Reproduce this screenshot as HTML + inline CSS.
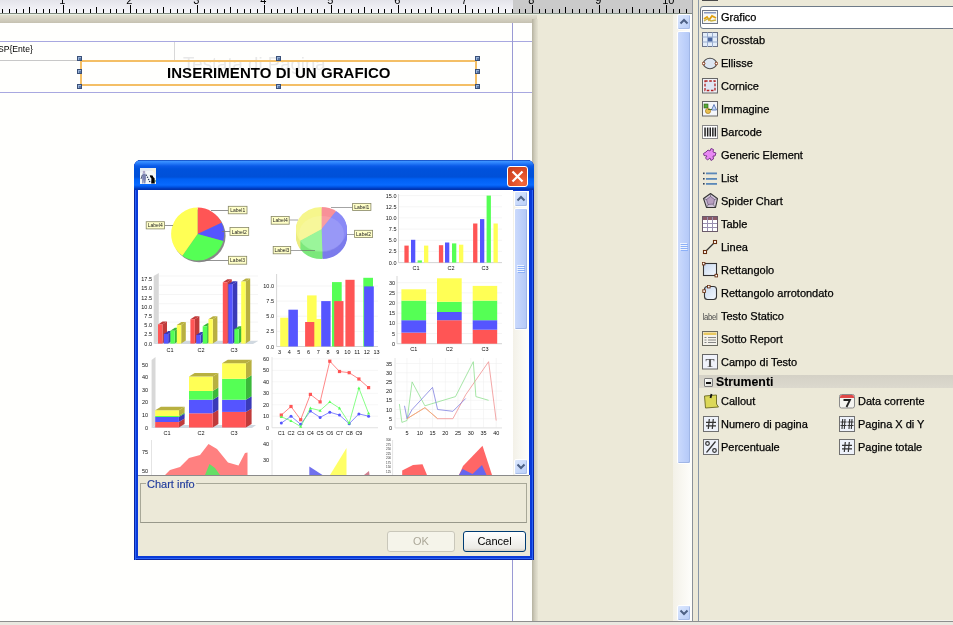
<!DOCTYPE html>
<html><head><meta charset="utf-8"><style>
*{margin:0;padding:0;box-sizing:border-box}
html,body{width:953px;height:625px;overflow:hidden}
body{position:relative;will-change:transform;background:#ece9d8;font-family:"Liberation Sans", sans-serif;font-size:11px;color:#000}
.a{position:absolute}
.h{position:absolute;width:5px;height:5px;background:#5a78a8;border:1px solid #3a5078;box-shadow:inset 1px 1px 0 #9ab4d8}
.pt{position:absolute;font-size:11px;line-height:14px;white-space:nowrap;color:#000;-webkit-text-stroke:0.25px #000}
.sbb{position:absolute;background:linear-gradient(135deg,#dce8fe,#b8cdf8);border:1px solid #fff;border-radius:2px;box-shadow:inset -1px -1px 0 #a8bde8}
.thumb{position:absolute;background:linear-gradient(90deg,#cbdafc,#bccffa 60%,#b3c8f6);border:1px solid #fff;border-radius:2px;box-shadow:inset -1px -1px 0 #a0b6e6}
</style></head><body>
<svg width="692" height="14" style="position:absolute;left:0;top:0"><defs><linearGradient id="rg" x1="0" y1="0" x2="0" y2="1"><stop offset="0" stop-color="#e4e4ea"/><stop offset="1" stop-color="#f8f8fc"/></linearGradient></defs><rect x="0" y="0" width="513" height="14" fill="url(#rg)"/><rect x="513" y="0" width="179" height="14" fill="#cacaca"/><rect x="2" y="9" width="1" height="4" fill="#000"/><rect x="9" y="9" width="1" height="4" fill="#000"/><rect x="16" y="9" width="1" height="4" fill="#000"/><rect x="23" y="9" width="1" height="4" fill="#000"/><rect x="29" y="7" width="1" height="6" fill="#000"/><rect x="36" y="9" width="1" height="4" fill="#000"/><rect x="43" y="9" width="1" height="4" fill="#000"/><rect x="49" y="9" width="1" height="4" fill="#000"/><rect x="56" y="9" width="1" height="4" fill="#000"/><rect x="63" y="5" width="1" height="8" fill="#000"/><text x="59.2" y="4" font-size="11" font-family="Liberation Sans" fill="#000">1</text><rect x="69" y="9" width="1" height="4" fill="#000"/><rect x="76" y="9" width="1" height="4" fill="#000"/><rect x="83" y="9" width="1" height="4" fill="#000"/><rect x="90" y="9" width="1" height="4" fill="#000"/><rect x="96" y="7" width="1" height="6" fill="#000"/><rect x="103" y="9" width="1" height="4" fill="#000"/><rect x="110" y="9" width="1" height="4" fill="#000"/><rect x="116" y="9" width="1" height="4" fill="#000"/><rect x="123" y="9" width="1" height="4" fill="#000"/><rect x="130" y="5" width="1" height="8" fill="#000"/><text x="126.2" y="4" font-size="11" font-family="Liberation Sans" fill="#000">2</text><rect x="136" y="9" width="1" height="4" fill="#000"/><rect x="143" y="9" width="1" height="4" fill="#000"/><rect x="150" y="9" width="1" height="4" fill="#000"/><rect x="157" y="9" width="1" height="4" fill="#000"/><rect x="163" y="7" width="1" height="6" fill="#000"/><rect x="170" y="9" width="1" height="4" fill="#000"/><rect x="177" y="9" width="1" height="4" fill="#000"/><rect x="183" y="9" width="1" height="4" fill="#000"/><rect x="190" y="9" width="1" height="4" fill="#000"/><rect x="197" y="5" width="1" height="8" fill="#000"/><text x="193.2" y="4" font-size="11" font-family="Liberation Sans" fill="#000">3</text><rect x="204" y="9" width="1" height="4" fill="#000"/><rect x="210" y="9" width="1" height="4" fill="#000"/><rect x="217" y="9" width="1" height="4" fill="#000"/><rect x="224" y="9" width="1" height="4" fill="#000"/><rect x="230" y="7" width="1" height="6" fill="#000"/><rect x="237" y="9" width="1" height="4" fill="#000"/><rect x="244" y="9" width="1" height="4" fill="#000"/><rect x="250" y="9" width="1" height="4" fill="#000"/><rect x="257" y="9" width="1" height="4" fill="#000"/><rect x="264" y="5" width="1" height="8" fill="#000"/><text x="260.2" y="4" font-size="11" font-family="Liberation Sans" fill="#000">4</text><rect x="271" y="9" width="1" height="4" fill="#000"/><rect x="277" y="9" width="1" height="4" fill="#000"/><rect x="284" y="9" width="1" height="4" fill="#000"/><rect x="291" y="9" width="1" height="4" fill="#000"/><rect x="297" y="7" width="1" height="6" fill="#000"/><rect x="304" y="9" width="1" height="4" fill="#000"/><rect x="311" y="9" width="1" height="4" fill="#000"/><rect x="317" y="9" width="1" height="4" fill="#000"/><rect x="324" y="9" width="1" height="4" fill="#000"/><rect x="331" y="5" width="1" height="8" fill="#000"/><text x="327.2" y="4" font-size="11" font-family="Liberation Sans" fill="#000">5</text><rect x="338" y="9" width="1" height="4" fill="#000"/><rect x="344" y="9" width="1" height="4" fill="#000"/><rect x="351" y="9" width="1" height="4" fill="#000"/><rect x="358" y="9" width="1" height="4" fill="#000"/><rect x="364" y="7" width="1" height="6" fill="#000"/><rect x="371" y="9" width="1" height="4" fill="#000"/><rect x="378" y="9" width="1" height="4" fill="#000"/><rect x="384" y="9" width="1" height="4" fill="#000"/><rect x="391" y="9" width="1" height="4" fill="#000"/><rect x="398" y="5" width="1" height="8" fill="#000"/><text x="394.2" y="4" font-size="11" font-family="Liberation Sans" fill="#000">6</text><rect x="405" y="9" width="1" height="4" fill="#000"/><rect x="411" y="9" width="1" height="4" fill="#000"/><rect x="418" y="9" width="1" height="4" fill="#000"/><rect x="425" y="9" width="1" height="4" fill="#000"/><rect x="431" y="7" width="1" height="6" fill="#000"/><rect x="438" y="9" width="1" height="4" fill="#000"/><rect x="445" y="9" width="1" height="4" fill="#000"/><rect x="451" y="9" width="1" height="4" fill="#000"/><rect x="458" y="9" width="1" height="4" fill="#000"/><rect x="465" y="5" width="1" height="8" fill="#000"/><text x="461.2" y="4" font-size="11" font-family="Liberation Sans" fill="#000">7</text><rect x="472" y="9" width="1" height="4" fill="#000"/><rect x="478" y="9" width="1" height="4" fill="#000"/><rect x="485" y="9" width="1" height="4" fill="#000"/><rect x="492" y="9" width="1" height="4" fill="#000"/><rect x="498" y="7" width="1" height="6" fill="#000"/><rect x="505" y="9" width="1" height="4" fill="#000"/><rect x="512" y="9" width="1" height="4" fill="#000"/><rect x="519" y="9" width="1" height="4" fill="#000"/><rect x="525" y="9" width="1" height="4" fill="#000"/><rect x="532" y="5" width="1" height="8" fill="#000"/><text x="528.2" y="4" font-size="11" font-family="Liberation Sans" fill="#000">8</text><rect x="539" y="9" width="1" height="4" fill="#000"/><rect x="545" y="9" width="1" height="4" fill="#000"/><rect x="552" y="9" width="1" height="4" fill="#000"/><rect x="559" y="9" width="1" height="4" fill="#000"/><rect x="565" y="7" width="1" height="6" fill="#000"/><rect x="572" y="9" width="1" height="4" fill="#000"/><rect x="579" y="9" width="1" height="4" fill="#000"/><rect x="586" y="9" width="1" height="4" fill="#000"/><rect x="592" y="9" width="1" height="4" fill="#000"/><rect x="599" y="5" width="1" height="8" fill="#000"/><text x="595.2" y="4" font-size="11" font-family="Liberation Sans" fill="#000">9</text><rect x="606" y="9" width="1" height="4" fill="#000"/><rect x="612" y="9" width="1" height="4" fill="#000"/><rect x="619" y="9" width="1" height="4" fill="#000"/><rect x="626" y="9" width="1" height="4" fill="#000"/><rect x="632" y="7" width="1" height="6" fill="#000"/><rect x="639" y="9" width="1" height="4" fill="#000"/><rect x="646" y="9" width="1" height="4" fill="#000"/><rect x="653" y="9" width="1" height="4" fill="#000"/><rect x="659" y="9" width="1" height="4" fill="#000"/><rect x="666" y="5" width="1" height="8" fill="#000"/><text x="662.2" y="4" font-size="11" font-family="Liberation Sans" fill="#000">10</text><rect x="673" y="9" width="1" height="4" fill="#000"/><rect x="679" y="9" width="1" height="4" fill="#000"/><rect x="686" y="9" width="1" height="4" fill="#000"/><rect x="0" y="13" width="692" height="1" fill="#7f8a7f"/></svg>
<div class="a" style="left:0;top:14px;width:692px;height:1px;background:#e8eee0"></div>
<div class="a" style="left:0;top:15px;width:537px;height:8px;background:linear-gradient(180deg,#e2dfd0,#cdc9b9 75%,#c4c0b0)"></div>
<div class="a" style="left:532px;top:19px;width:6px;height:602px;background:linear-gradient(90deg,#b6b2a0,#d0cdbc 45%,#e6e3d2)"></div>
<div class="a" style="left:0;top:23px;width:532px;height:598px;background:#fffffd"></div>
<div class="a" style="left:0;top:41px;width:532px;height:1px;background:#a8a8e0"></div>
<div class="a" style="left:0;top:92px;width:532px;height:1px;background:#a8a8e0"></div>
<div class="a" style="left:512px;top:23px;width:1px;height:598px;background:#9a9ad4"></div>
<div class="a" style="left:0;top:60px;width:80px;height:1px;background:#c8c8c8"></div>
<div class="a" style="left:174px;top:42px;width:1px;height:18px;background:#d8d8d8"></div>
<div class="a" style="left:-2px;top:44px;font-size:8.6px;line-height:10px;color:#000">SP{Ente}</div>
<div class="a" style="left:183px;top:53px;font-size:18.6px;line-height:21px;color:#e8e8e8;white-space:nowrap">Testata di Pagina</div>
<div class="a" style="left:80px;top:60px;width:397px;height:26px;border:2px solid #f4bf66"></div>
<div class="a" style="left:167px;top:64px;font-size:15px;line-height:17px;font-weight:bold;white-space:nowrap;letter-spacing:0.05px">INSERIMENTO DI UN GRAFICO</div>
<div class="h" style="left:77px;top:56px"></div><div class="h" style="left:77px;top:69px"></div><div class="h" style="left:77px;top:84px"></div><div class="h" style="left:276px;top:56px"></div><div class="h" style="left:276px;top:84px"></div><div class="h" style="left:475px;top:56px"></div><div class="h" style="left:475px;top:69px"></div><div class="h" style="left:475px;top:84px"></div>
<div class="a" style="left:0;top:621px;width:953px;height:1px;background:#8e8e8e"></div><div class="a" style="left:0;top:622px;width:953px;height:3px;background:#e9e8e0"></div>
<div class="a" style="left:673px;top:14px;width:19px;height:607px;background:linear-gradient(90deg,#f3f1e8,#fefefb)"></div>
<div class="sbb" style="left:677px;top:14px;width:14px;height:16px"><svg width="14" height="16" style="position:absolute;left:-1px;top:-1px"><path d="M3.5 9.5 L7 6 L10.5 9.5" stroke="#4d6185" stroke-width="2" fill="none"/></svg></div>
<div class="thumb" style="left:677px;top:31px;width:14px;height:433px"></div>
<div style="position:absolute;left:680px;top:243px;width:7px;height:1px;background:#eef4fe;box-shadow:1px 1px 0 #8cb0f8"></div><div style="position:absolute;left:680px;top:245px;width:7px;height:1px;background:#eef4fe;box-shadow:1px 1px 0 #8cb0f8"></div><div style="position:absolute;left:680px;top:247px;width:7px;height:1px;background:#eef4fe;box-shadow:1px 1px 0 #8cb0f8"></div><div style="position:absolute;left:680px;top:249px;width:7px;height:1px;background:#eef4fe;box-shadow:1px 1px 0 #8cb0f8"></div>
<div class="sbb" style="left:677px;top:605px;width:14px;height:16px"><svg width="14" height="16" style="position:absolute;left:-1px;top:-1px"><path d="M3.5 5.5 L7 9 L10.5 5.5" stroke="#4d6185" stroke-width="2" fill="none"/></svg></div>
<div class="a" style="left:692px;top:0;width:1px;height:622px;background:#8a9098"></div>
<div class="a" style="left:698px;top:0;width:1px;height:621px;background:#8a98a8"></div>
<div class="a" style="left:699px;top:620px;width:254px;height:1px;background:#f2f1ea"></div>
<div style="position:absolute;left:700px;top:6px;width:260px;height:23px;background:#fff;border:1px solid #6e7a88;border-radius:3px 0 0 3px"></div><svg style="position:absolute;left:702px;top:10px" width="16" height="16"><rect x="0.5" y="0.5" width="15" height="13" fill="#f8f8f4" stroke="#707888"/><rect x="2" y="2" width="12" height="1.5" fill="#8898c0"/><path d="M2 9 L5 7 L7 10 L10 6 L14 8" stroke="#e0a010" stroke-width="1.8" fill="none"/><path d="M2 11 L6 8.5 L9 11 L14 10" stroke="#c8b040" stroke-width="1.3" fill="none"/></svg><div class="pt" style="left:721px;top:10px">Grafico</div><svg style="position:absolute;left:702px;top:32px" width="16" height="16"><rect x="0.5" y="0.5" width="15" height="14" fill="#e4eefa" stroke="#6b7388"/><path d="M0.5 5H15.5M0.5 10H15.5M5.5 0.5V15M10.5 0.5V15" stroke="#9aaed0"/><rect x="6" y="5.5" width="4" height="4" fill="#4a66a0"/></svg><div class="pt" style="left:721px;top:33px">Crosstab</div><svg style="position:absolute;left:702px;top:55px" width="16" height="16"><ellipse cx="8" cy="8.5" rx="6.5" ry="5.2" fill="#dde6f2" stroke="#4a4a4a" stroke-width="1.1"/><circle cx="1.6" cy="8.5" r="1.3" fill="#fff" stroke="#803010"/><circle cx="14.4" cy="8.5" r="1.3" fill="#fff" stroke="#803010"/></svg><div class="pt" style="left:721px;top:56px">Ellisse</div><svg style="position:absolute;left:702px;top:78px" width="16" height="16"><rect x="0.5" y="0.5" width="15" height="14.5" fill="#eef0f6" stroke="#666"/><rect x="3" y="3" width="10" height="9.5" fill="#dfe6f4" stroke="#b02020" stroke-width="1.3" stroke-dasharray="2.6 1.6"/></svg><div class="pt" style="left:721px;top:79px">Cornice</div><svg style="position:absolute;left:702px;top:101px" width="16" height="16"><rect x="0.5" y="0.5" width="15" height="14.5" fill="#f4f6fa" stroke="#666"/><rect x="2" y="3" width="4" height="4" fill="#5aa838" stroke="#2a6010" stroke-width="0.6"/><path d="M9.5 9 L12 3.5 L14.5 9Z" fill="#c8daf4" stroke="#4a6ab0" stroke-width="0.8"/><circle cx="6" cy="10" r="2.6" fill="#e8c050" stroke="#a07010" stroke-width="0.6"/><path d="M6 8.5 L10 8.5" stroke="#2a6010" stroke-width="0.8"/></svg><div class="pt" style="left:721px;top:102px">Immagine</div><svg style="position:absolute;left:702px;top:124px" width="16" height="16"><rect x="0.5" y="1.5" width="15" height="13" fill="#fff" stroke="#8a8a8a"/><rect x="2.3" y="3.5" width="1.5" height="9" fill="#222"/><rect x="4.9" y="3.5" width="1.5" height="9" fill="#222"/><rect x="7.5" y="3.5" width="1.5" height="9" fill="#222"/><rect x="10.1" y="3.5" width="1.5" height="9" fill="#222"/><rect x="12.6" y="3.5" width="1.5" height="9" fill="#222"/></svg><div class="pt" style="left:721px;top:125px">Barcode</div><svg style="position:absolute;left:702px;top:147px" width="16" height="16"><path d="M4 5 L6 3 L8 4 L9 1.5 L11.5 2.5 L11 5 L14 6 L13 9 L11 9 L11.5 12 L9 13.5 L8 11 L5.5 13 L3.5 11 L5 9 L2 8.5 L1.5 6.5Z" fill="#e888f4" stroke="#7a3a8a" stroke-width="1"/></svg><div class="pt" style="left:721px;top:148px">Generic Element</div><svg style="position:absolute;left:702px;top:170px" width="16" height="16"><rect x="1" y="2.5" width="1.6" height="1.6" fill="#304058"/><rect x="4" y="2.5" width="11" height="1.8" fill="#5a88b8"/><rect x="1" y="8" width="1.6" height="1.6" fill="#304058"/><rect x="4" y="8" width="11" height="1.8" fill="#5a88b8"/><rect x="1" y="13" width="1.6" height="1.6" fill="#304058"/><rect x="4" y="13" width="11" height="1.8" fill="#5a88b8"/></svg><div class="pt" style="left:721px;top:171px">List</div><svg style="position:absolute;left:702px;top:193px" width="16" height="16"><path d="M8.5 0.5 L15.5 5.5 L13.5 14.5 L4.5 14.5 L1.5 5.5Z" fill="#d0c4d8" stroke="#333" stroke-width="1.1"/><path d="M8.5 8 L8.5 0.5 M8.5 8 L15.5 5.5 M8.5 8 L13.5 14.5 M8.5 8 L4.5 14.5 M8.5 8 L1.5 5.5" stroke="#555" stroke-width="0.6" fill="none"/><path d="M8.5 3.5 L12.5 6.5 L11.5 11 L6 11.5 L4.5 6.5Z" fill="#b8a0c0" stroke="#604a70" stroke-width="0.6"/></svg><div class="pt" style="left:721px;top:194px">Spider Chart</div><svg style="position:absolute;left:702px;top:216px" width="16" height="16"><rect x="0.5" y="0.5" width="15" height="15" fill="#fff" stroke="#6a5a6a"/><rect x="1" y="1" width="14" height="3" fill="#8a5a68"/><path d="M1 7.5H15M1 11.5H15M5.5 1V15M10.5 1V15" stroke="#9a90b0"/></svg><div class="pt" style="left:721px;top:217px">Table</div><svg style="position:absolute;left:702px;top:239px" width="16" height="16"><path d="M3 13 L13 3" stroke="#333" stroke-width="1.3"/><rect x="1.5" y="11.5" width="3" height="3" fill="#fff" stroke="#6a3010" stroke-width="1.1"/><rect x="11.5" y="1.5" width="3" height="3" fill="#fff" stroke="#6a3010" stroke-width="1.1"/></svg><div class="pt" style="left:721px;top:240px">Linea</div><svg style="position:absolute;left:702px;top:262px" width="16" height="16"><defs><linearGradient id="gr1" x1="0" y1="0" x2="1" y2="1"><stop offset="0" stop-color="#c8daf0"/><stop offset="1" stop-color="#f4f8fc"/></linearGradient></defs><rect x="1.5" y="1.5" width="13" height="12" fill="url(#gr1)" stroke="#333" stroke-width="1.1"/><rect x="0.3" y="0.3" width="2.6" height="2.6" fill="#fff" stroke="#6a3010" stroke-width="0.9"/><rect x="13" y="12.3" width="2.6" height="2.6" fill="#fff" stroke="#6a3010" stroke-width="0.9"/></svg><div class="pt" style="left:721px;top:263px">Rettangolo</div><svg style="position:absolute;left:702px;top:285px" width="16" height="16"><defs><linearGradient id="gr2" x1="0" y1="0" x2="1" y2="1"><stop offset="0" stop-color="#c8daf0"/><stop offset="1" stop-color="#f4f8fc"/></linearGradient></defs><rect x="2.5" y="1.5" width="12" height="13" rx="3" fill="url(#gr2)" stroke="#333" stroke-width="1.1"/><rect x="5.5" y="0.3" width="2.6" height="2.6" fill="#fff" stroke="#6a3010" stroke-width="0.9"/><rect x="0.8" y="4.8" width="2.6" height="2.6" fill="#fff" stroke="#6a3010" stroke-width="0.9"/></svg><div class="pt" style="left:721px;top:286px">Rettangolo arrotondato</div><svg style="position:absolute;left:702px;top:308px" width="16" height="16"><text x="0.5" y="11.5" font-family="Liberation Sans" font-size="9" fill="#4a4a4a" textLength="15" lengthAdjust="spacingAndGlyphs" style="letter-spacing:-0.3px">label</text></svg><div class="pt" style="left:721px;top:309px">Testo Statico</div><svg style="position:absolute;left:702px;top:331px" width="16" height="16"><rect x="0.5" y="0.5" width="15" height="14" fill="#f4f2ea" stroke="#6a6a60"/><rect x="1.5" y="1.5" width="13" height="2.5" fill="#e8c860"/><path d="M2.5 6.5H4.5M6 6.5H14M2.5 9H4.5M6 9H14M2.5 11.5H4.5M6 11.5H14" stroke="#7a7a7a" stroke-width="0.9"/></svg><div class="pt" style="left:721px;top:332px">Sotto Report</div><svg style="position:absolute;left:702px;top:354px" width="16" height="16"><rect x="0.5" y="0.5" width="15" height="14.5" fill="#f0f2fa" stroke="#666"/><text x="8" y="13" text-anchor="middle" font-family="Liberation Serif" font-size="13.5" font-weight="bold" fill="#555">T</text></svg><div class="pt" style="left:721px;top:355px">Campo di Testo</div><div style="position:absolute;left:702px;top:-14px;width:16px;height:15px;border:1px solid #4a4a4a;background:#e8dcd8"></div><div style="position:absolute;left:699px;top:375px;width:254px;height:13px;background:linear-gradient(180deg,#d4d1c6,#dcd9ce)"></div><div style="position:absolute;left:704px;top:378px;width:9px;height:9px;border:1px solid #7a7a7a;border-radius:1px;background:linear-gradient(135deg,#fff,#d8d8d0)"></div><div style="position:absolute;left:706px;top:382px;width:5px;height:1.5px;background:#111"></div><div class="pt" style="left:716px;top:375px;font-weight:bold;font-size:12.3px;-webkit-text-stroke:0.1px #000">Strumenti</div><svg style="position:absolute;left:703px;top:393px" width="16" height="16"><path d="M1.5 3 L13.5 2 L13.5 11 L15.5 14 L2.5 15Z" fill="#dcd858" stroke="#6a6820" stroke-width="0.9"/><path d="M8.5 1 L7.5 5" stroke="#111" stroke-width="1.8"/></svg><div class="pt" style="left:721px;top:394px">Callout</div><svg style="position:absolute;left:703px;top:416px" width="16" height="16"><rect x="0.5" y="0.5" width="15" height="15" fill="#eef2fa" stroke="#707070"/><path d="M6.3 3 L5.3 13 M10.3 3 L9.3 13 M3 6.3 H13 M3 9.8 H13" stroke="#333" stroke-width="1.2"/></svg><div class="pt" style="left:721px;top:417px">Numero di pagina</div><svg style="position:absolute;left:703px;top:439px" width="16" height="16"><rect x="0.5" y="0.5" width="15" height="15" fill="#eef2fa" stroke="#707070"/><circle cx="4.5" cy="4.5" r="1.8" fill="none" stroke="#333" stroke-width="1.2"/><circle cx="11.5" cy="11.5" r="1.8" fill="none" stroke="#333" stroke-width="1.2"/><path d="M12.5 2.5 L3.5 13.5" stroke="#333" stroke-width="1.2"/></svg><div class="pt" style="left:721px;top:440px">Percentuale</div><svg style="position:absolute;left:839px;top:393px" width="16" height="16"><rect x="0.5" y="1.5" width="15" height="13.5" rx="2" fill="#f4f4f0" stroke="#8a8a8a"/><path d="M1 4 Q1 2 3 2 H13 Q15 2 15 4 V5 H1Z" fill="#e04848"/><path d="M4.5 7 H11 L7.5 14" stroke="#222" stroke-width="1.8" fill="none"/></svg><div class="pt" style="left:858px;top:394px">Data corrente</div><svg style="position:absolute;left:839px;top:416px" width="16" height="16"><rect x="0.5" y="0.5" width="15" height="15" fill="#eef2fa" stroke="#707070"/><path d="M3.7 3 L3 13 M6 3 L5.3 13 M1.5 6 H7.5 M1.5 9.5 H7.5 M10.7 3 L10 13 M13 3 L12.3 13 M8.5 6 H14.5 M8.5 9.5 H14.5" stroke="#333" stroke-width="1.1"/></svg><div class="pt" style="left:858px;top:417px">Pagina X di Y</div><svg style="position:absolute;left:839px;top:439px" width="16" height="16"><rect x="0.5" y="0.5" width="15" height="15" fill="#eef2fa" stroke="#707070"/><path d="M6.3 3 L5.3 13 M10.3 3 L9.3 13 M3 6.3 H13 M3 9.8 H13" stroke="#333" stroke-width="1.2"/></svg><div class="pt" style="left:858px;top:440px">Pagine totale</div>

<div class="a" style="left:134px;top:160px;width:400px;height:400px;background:#0a3ad8;border-radius:7px 7px 0 0;box-shadow:inset 1px 0 0 #0a24a0,inset 2px 0 0 #2a64f6,inset -1px 0 0 #0a24a0,inset -2px 0 0 #2a64f6,inset 0 -1px 0 #0a24a0,inset 0 -2px 0 #2a64f6"></div>
<div class="a" style="left:134px;top:160px;width:400px;height:30px;border-radius:7px 7px 0 0;background:linear-gradient(180deg,#0a40b8 0px,#3a90ff 1.5px,#2a80fb 3px,#0a5ae8 6px,#0052dc 9px,#0050d8 17px,#0060f4 19px,#086aff 25px,#0052e2 27px,#003cc0 28.5px,#0030a8 30px)"></div>
<div class="a" style="left:138px;top:475px;width:392px;height:81px;background:#ece9d8"></div>
<div class="a" style="left:138px;top:190px;width:375px;height:285px;background:#fff;overflow:hidden">
<svg width="375" height="285" viewBox="138 190 375 285" style="position:absolute;left:0;top:0;font-family:'Liberation Sans'"><ellipse cx="199.1" cy="235.8" rx="26.5" ry="26.5" fill="#555" opacity="0.7"/><path d="M197.6 234.0 L197.6 207.5 A26.5 26.5 0 0 1 221.6 222.8Z" fill="#ff5555"/><path d="M197.6 234.0 L221.6 222.8 A26.5 26.5 0 0 1 223.2 240.9Z" fill="#5555ff"/><path d="M197.6 234.0 L223.2 240.9 A26.5 26.5 0 0 1 182.4 255.7Z" fill="#55ff55"/><path d="M197.6 234.0 L182.4 255.7 A26.5 26.5 0 0 1 197.6 207.5Z" fill="#ffff55"/><path d="M211 210.5 L228.3 210.5 M222 231.5 L230 231.5 M205 260.5 L228.4 260.5 M173 225.5 L164.5 225.5" stroke="#777" stroke-width="0.8" fill="none"/><rect x="228.3" y="206.3" width="18.69999999999999" height="7.5" fill="#ffffc8" stroke="#888866" stroke-width="0.8"/><text x="237.7" y="212.0" font-size="5" text-anchor="middle" fill="#222">Label1</text><rect x="230" y="227.5" width="18.69999999999999" height="7.900000000000006" fill="#ffffc8" stroke="#888866" stroke-width="0.8"/><text x="239.3" y="233.6" font-size="5" text-anchor="middle" fill="#222">Label2</text><rect x="228.4" y="256.3" width="18.299999999999983" height="7.899999999999977" fill="#ffffc8" stroke="#888866" stroke-width="0.8"/><text x="237.6" y="262.4" font-size="5" text-anchor="middle" fill="#222">Label3</text><rect x="146.2" y="221.7" width="18.30000000000001" height="7.200000000000017" fill="#ffffc8" stroke="#888866" stroke-width="0.8"/><text x="155.3" y="227.1" font-size="5" text-anchor="middle" fill="#222">Label4</text><path d="M321.5 237.0 L321.5 215.0 A25.5 22 0 0 1 336.1 219.0Z" fill="#ec8890"/><path d="M321.5 237.0 L336.1 219.0 A25.5 22 0 0 1 322.4 259.0Z" fill="#7c7cec"/><path d="M321.5 237.0 L322.4 259.0 A25.5 22 0 0 1 299.9 248.7Z" fill="#7ce87c"/><path d="M321.5 237.0 L299.9 248.7 A25.5 22 0 0 1 321.5 215.0Z" fill="#ecec80"/><path d="M321.5 236.0 L321.5 214.0 A25.5 22 0 0 1 336.1 218.0Z" fill="#ec8890"/><path d="M321.5 236.0 L336.1 218.0 A25.5 22 0 0 1 322.4 258.0Z" fill="#7c7cec"/><path d="M321.5 236.0 L322.4 258.0 A25.5 22 0 0 1 299.9 247.7Z" fill="#7ce87c"/><path d="M321.5 236.0 L299.9 247.7 A25.5 22 0 0 1 321.5 214.0Z" fill="#ecec80"/><path d="M321.5 235.0 L321.5 213.0 A25.5 22 0 0 1 336.1 217.0Z" fill="#ec8890"/><path d="M321.5 235.0 L336.1 217.0 A25.5 22 0 0 1 322.4 257.0Z" fill="#7c7cec"/><path d="M321.5 235.0 L322.4 257.0 A25.5 22 0 0 1 299.9 246.7Z" fill="#7ce87c"/><path d="M321.5 235.0 L299.9 246.7 A25.5 22 0 0 1 321.5 213.0Z" fill="#ecec80"/><path d="M321.5 234.0 L321.5 212.0 A25.5 22 0 0 1 336.1 216.0Z" fill="#ec8890"/><path d="M321.5 234.0 L336.1 216.0 A25.5 22 0 0 1 322.4 256.0Z" fill="#7c7cec"/><path d="M321.5 234.0 L322.4 256.0 A25.5 22 0 0 1 299.9 245.7Z" fill="#7ce87c"/><path d="M321.5 234.0 L299.9 245.7 A25.5 22 0 0 1 321.5 212.0Z" fill="#ecec80"/><path d="M321.5 233.0 L321.5 211.0 A25.5 22 0 0 1 336.1 215.0Z" fill="#ec8890"/><path d="M321.5 233.0 L336.1 215.0 A25.5 22 0 0 1 322.4 255.0Z" fill="#7c7cec"/><path d="M321.5 233.0 L322.4 255.0 A25.5 22 0 0 1 299.9 244.7Z" fill="#7ce87c"/><path d="M321.5 233.0 L299.9 244.7 A25.5 22 0 0 1 321.5 211.0Z" fill="#ecec80"/><path d="M321.5 232.0 L321.5 210.0 A25.5 22 0 0 1 336.1 214.0Z" fill="#ec8890"/><path d="M321.5 232.0 L336.1 214.0 A25.5 22 0 0 1 322.4 254.0Z" fill="#7c7cec"/><path d="M321.5 232.0 L322.4 254.0 A25.5 22 0 0 1 299.9 243.7Z" fill="#7ce87c"/><path d="M321.5 232.0 L299.9 243.7 A25.5 22 0 0 1 321.5 210.0Z" fill="#ecec80"/><path d="M321.5 231.0 L321.5 209.0 A25.5 22 0 0 1 336.1 213.0Z" fill="#ec8890"/><path d="M321.5 231.0 L336.1 213.0 A25.5 22 0 0 1 322.4 253.0Z" fill="#7c7cec"/><path d="M321.5 231.0 L322.4 253.0 A25.5 22 0 0 1 299.9 242.7Z" fill="#7ce87c"/><path d="M321.5 231.0 L299.9 242.7 A25.5 22 0 0 1 321.5 209.0Z" fill="#ecec80"/><path d="M321.5 230.0 L321.5 208.0 A25.5 22 0 0 1 336.1 212.0Z" fill="#ec8890"/><path d="M321.5 230.0 L336.1 212.0 A25.5 22 0 0 1 322.4 252.0Z" fill="#7c7cec"/><path d="M321.5 230.0 L322.4 252.0 A25.5 22 0 0 1 299.9 241.7Z" fill="#7ce87c"/><path d="M321.5 230.0 L299.9 241.7 A25.5 22 0 0 1 321.5 208.0Z" fill="#ecec80"/><path d="M321.5 229.0 L321.5 207.0 A25.5 22 0 0 1 336.1 211.0Z" fill="#f89098"/><path d="M321.5 229.0 L336.1 211.0 A25.5 22 0 0 1 322.4 251.0Z" fill="#8a8af6"/><path d="M321.5 229.0 L322.4 251.0 A25.5 22 0 0 1 299.9 240.7Z" fill="#8cf48c"/><path d="M321.5 229.0 L299.9 240.7 A25.5 22 0 0 1 321.5 207.0Z" fill="#f6f68c"/><ellipse cx="321.5" cy="234" rx="22.5" ry="18" fill="#fff" opacity="0.12"/><path d="M331 207.5 L352.6 207.5 M347 234.5 L354.6 234.5 M315 250.5 L290.7 250.5 M298 220 L289.2 220" stroke="#666" stroke-width="0.6" fill="none"/><rect x="352.6" y="203.4" width="18.299999999999955" height="7.199999999999989" fill="#ffffc8" stroke="#888866" stroke-width="0.8"/><text x="361.8" y="208.8" font-size="5" text-anchor="middle" fill="#222">Label1</text><rect x="354.6" y="230.3" width="18.0" height="7.199999999999989" fill="#ffffc8" stroke="#888866" stroke-width="0.8"/><text x="363.6" y="235.7" font-size="5" text-anchor="middle" fill="#222">Label2</text><rect x="273.2" y="246.5" width="17.5" height="7.300000000000011" fill="#ffffc8" stroke="#888866" stroke-width="0.8"/><text x="281.9" y="252.0" font-size="5" text-anchor="middle" fill="#222">Label3</text><rect x="271.2" y="216.4" width="18.0" height="7.799999999999983" fill="#ffffc8" stroke="#888866" stroke-width="0.8"/><text x="280.2" y="222.4" font-size="5" text-anchor="middle" fill="#222">Label4</text><line x1="398.5" y1="262.6" x2="502" y2="262.6" stroke="#eeeeee" stroke-width="0.6"/><text x="396.5" y="264.6" font-size="5.5" text-anchor="end" fill="#111">0.0</text><line x1="398.5" y1="251.4" x2="502" y2="251.4" stroke="#eeeeee" stroke-width="0.6"/><text x="396.5" y="253.4" font-size="5.5" text-anchor="end" fill="#111">2.5</text><line x1="398.5" y1="240.3" x2="502" y2="240.3" stroke="#eeeeee" stroke-width="0.6"/><text x="396.5" y="242.3" font-size="5.5" text-anchor="end" fill="#111">5.0</text><line x1="398.5" y1="229.1" x2="502" y2="229.1" stroke="#eeeeee" stroke-width="0.6"/><text x="396.5" y="231.1" font-size="5.5" text-anchor="end" fill="#111">7.5</text><line x1="398.5" y1="217.9" x2="502" y2="217.9" stroke="#eeeeee" stroke-width="0.6"/><text x="396.5" y="219.9" font-size="5.5" text-anchor="end" fill="#111">10.0</text><line x1="398.5" y1="206.8" x2="502" y2="206.8" stroke="#eeeeee" stroke-width="0.6"/><text x="396.5" y="208.8" font-size="5.5" text-anchor="end" fill="#111">12.5</text><line x1="398.5" y1="195.6" x2="502" y2="195.6" stroke="#eeeeee" stroke-width="0.6"/><text x="396.5" y="197.6" font-size="5.5" text-anchor="end" fill="#111">15.0</text><line x1="398.5" y1="194" x2="398.5" y2="262.6" stroke="#ccc" stroke-width="0.8"/><line x1="398.5" y1="262.6" x2="502" y2="262.6" stroke="#ccc" stroke-width="0.8"/><rect x="404.4" y="245.6" width="4.3" height="17.0" fill="#ff5555"/><rect x="411" y="239.8" width="4.3" height="22.8" fill="#5555ff"/><rect x="417.6" y="260.4" width="4.3" height="2.2" fill="#55ff55"/><rect x="424" y="245.6" width="4.3" height="17.0" fill="#ffff55"/><rect x="438.9" y="245.2" width="4.3" height="17.4" fill="#ff5555"/><rect x="445" y="242.5" width="4.3" height="20.1" fill="#5555ff"/><rect x="452" y="243.4" width="4.3" height="19.2" fill="#55ff55"/><rect x="459" y="244.7" width="4.3" height="17.9" fill="#ffff55"/><rect x="473.1" y="223.5" width="4.3" height="39.1" fill="#ff5555"/><rect x="480" y="219.1" width="4.3" height="43.6" fill="#5555ff"/><rect x="486.6" y="195.6" width="4.3" height="67.0" fill="#55ff55"/><rect x="493.5" y="223.5" width="4.3" height="39.1" fill="#ffff55"/><text x="416.0" y="270.0" font-size="5.5" text-anchor="middle" fill="#111">C1</text><text x="451.0" y="270.0" font-size="5.5" text-anchor="middle" fill="#111">C2</text><text x="485.0" y="270.0" font-size="5.5" text-anchor="middle" fill="#111">C3</text><path d="M153.7 276 L158.8 273 L158.8 341 L153.7 344Z" fill="#d8d8d8"/><path d="M153.7 344 L158.8 341 L258 341 L253 344Z" fill="#d0d8e0"/><line x1="158.8" y1="340.6" x2="258" y2="340.6" stroke="#eeeeee" stroke-width="0.6"/><text x="152.0" y="345.6" font-size="5.5" text-anchor="end" fill="#111">0.0</text><line x1="158.8" y1="331.4" x2="258" y2="331.4" stroke="#eeeeee" stroke-width="0.6"/><text x="152.0" y="336.4" font-size="5.5" text-anchor="end" fill="#111">2.5</text><line x1="158.8" y1="322.1" x2="258" y2="322.1" stroke="#eeeeee" stroke-width="0.6"/><text x="152.0" y="327.1" font-size="5.5" text-anchor="end" fill="#111">5.0</text><line x1="158.8" y1="312.9" x2="258" y2="312.9" stroke="#eeeeee" stroke-width="0.6"/><text x="152.0" y="317.9" font-size="5.5" text-anchor="end" fill="#111">7.5</text><line x1="158.8" y1="303.7" x2="258" y2="303.7" stroke="#eeeeee" stroke-width="0.6"/><text x="152.0" y="308.7" font-size="5.5" text-anchor="end" fill="#111">10.0</text><line x1="158.8" y1="294.5" x2="258" y2="294.5" stroke="#eeeeee" stroke-width="0.6"/><text x="152.0" y="299.5" font-size="5.5" text-anchor="end" fill="#111">12.5</text><line x1="158.8" y1="285.2" x2="258" y2="285.2" stroke="#eeeeee" stroke-width="0.6"/><text x="152.0" y="290.2" font-size="5.5" text-anchor="end" fill="#111">15.0</text><line x1="158.8" y1="276.0" x2="258" y2="276.0" stroke="#eeeeee" stroke-width="0.6"/><text x="152.0" y="281.0" font-size="5.5" text-anchor="end" fill="#111">17.5</text><path d="M162.4 343.6 L167.0 340.6 L167.0 321.4 L162.4 324.4Z" fill="#c03a3a"/><path d="M158.0 324.4 L162.6 321.4 L167.0 321.4 L162.4 324.4Z" fill="#c03a3a"/><rect x="158" y="324.4" width="4.4" height="19.2" fill="#ff5555"/><path d="M168.2 343.6 L172.8 340.6 L172.8 331.0 L168.2 334.0Z" fill="#3a3ab8"/><path d="M163.8 334.0 L168.4 331.0 L172.8 331.0 L168.2 334.0Z" fill="#3a3ab8"/><rect x="163.8" y="334.0" width="4.4" height="9.6" fill="#5555ff"/><path d="M174.7 343.6 L179.3 340.6 L179.3 327.7 L174.7 330.7Z" fill="#3ab83a"/><path d="M170.3 330.7 L174.9 327.7 L179.3 327.7 L174.7 330.7Z" fill="#3ab83a"/><rect x="170.3" y="330.7" width="4.4" height="12.9" fill="#55ff55"/><path d="M181.2 343.6 L185.8 340.6 L185.8 322.1 L181.2 325.1Z" fill="#b8b040"/><path d="M176.8 325.1 L181.4 322.1 L185.8 322.1 L181.2 325.1Z" fill="#b8b040"/><rect x="176.8" y="325.1" width="4.4" height="18.5" fill="#ffff55"/><path d="M194.8 343.6 L199.4 340.6 L199.4 316.2 L194.8 319.2Z" fill="#c03a3a"/><path d="M190.4 319.2 L195.0 316.2 L199.4 316.2 L194.8 319.2Z" fill="#c03a3a"/><rect x="190.4" y="319.2" width="4.4" height="24.4" fill="#ff5555"/><path d="M200.6 343.6 L205.2 340.6 L205.2 332.1 L200.6 335.1Z" fill="#3a3ab8"/><path d="M196.2 335.1 L200.8 332.1 L205.2 332.1 L200.6 335.1Z" fill="#3a3ab8"/><rect x="196.2" y="335.1" width="4.4" height="8.5" fill="#5555ff"/><path d="M207.1 343.6 L211.7 340.6 L211.7 323.3 L207.1 326.3Z" fill="#3ab83a"/><path d="M202.7 326.3 L207.3 323.3 L211.7 323.3 L207.1 326.3Z" fill="#3ab83a"/><rect x="202.7" y="326.3" width="4.4" height="17.3" fill="#55ff55"/><path d="M212.8 343.6 L217.4 340.6 L217.4 316.2 L212.8 319.2Z" fill="#b8b040"/><path d="M208.4 319.2 L213.0 316.2 L217.4 316.2 L212.8 319.2Z" fill="#b8b040"/><rect x="208.4" y="319.2" width="4.4" height="24.4" fill="#ffff55"/><path d="M227.2 343.6 L231.8 340.6 L231.8 279.3 L227.2 282.3Z" fill="#c03a3a"/><path d="M222.8 282.3 L227.4 279.3 L231.8 279.3 L227.2 282.3Z" fill="#c03a3a"/><rect x="222.8" y="282.3" width="4.4" height="61.3" fill="#ff5555"/><path d="M232.7 343.6 L237.3 340.6 L237.3 281.2 L232.7 284.2Z" fill="#3a3ab8"/><path d="M228.3 284.2 L232.9 281.2 L237.3 281.2 L232.7 284.2Z" fill="#3a3ab8"/><rect x="228.3" y="284.2" width="4.4" height="59.4" fill="#5555ff"/><path d="M238.7 343.6 L243.3 340.6 L243.3 326.2 L238.7 329.2Z" fill="#3ab83a"/><path d="M234.3 329.2 L238.9 326.2 L243.3 326.2 L238.7 329.2Z" fill="#3ab83a"/><rect x="234.3" y="329.2" width="4.4" height="14.4" fill="#55ff55"/><path d="M245.6 343.6 L250.2 340.6 L250.2 278.6 L245.6 281.6Z" fill="#b8b040"/><path d="M241.2 281.6 L245.8 278.6 L250.2 278.6 L245.6 281.6Z" fill="#b8b040"/><rect x="241.2" y="281.6" width="4.4" height="62.0" fill="#ffff55"/><text x="170.0" y="352.0" font-size="5.5" text-anchor="middle" fill="#111">C1</text><text x="201.0" y="352.0" font-size="5.5" text-anchor="middle" fill="#111">C2</text><text x="234.0" y="352.0" font-size="5.5" text-anchor="middle" fill="#111">C3</text><line x1="276.6" y1="346.5" x2="378" y2="346.5" stroke="#eeeeee" stroke-width="0.6"/><text x="274.0" y="348.5" font-size="5.5" text-anchor="end" fill="#111">0.0</text><line x1="276.6" y1="331.4" x2="378" y2="331.4" stroke="#eeeeee" stroke-width="0.6"/><text x="274.0" y="333.4" font-size="5.5" text-anchor="end" fill="#111">2.5</text><line x1="276.6" y1="316.2" x2="378" y2="316.2" stroke="#eeeeee" stroke-width="0.6"/><text x="274.0" y="318.2" font-size="5.5" text-anchor="end" fill="#111">5.0</text><line x1="276.6" y1="301.1" x2="378" y2="301.1" stroke="#eeeeee" stroke-width="0.6"/><text x="274.0" y="303.1" font-size="5.5" text-anchor="end" fill="#111">7.5</text><line x1="276.6" y1="286.0" x2="378" y2="286.0" stroke="#eeeeee" stroke-width="0.6"/><text x="274.0" y="288.0" font-size="5.5" text-anchor="end" fill="#111">10.0</text><line x1="276.6" y1="274" x2="276.6" y2="346.5" stroke="#ccc" stroke-width="0.8"/><line x1="276.6" y1="346.5" x2="378" y2="346.5" stroke="#ccc" stroke-width="0.8"/><rect x="280.2" y="317.7" width="8.2" height="28.8" fill="#ffff55"/><rect x="288.4" y="309.7" width="9.5" height="36.8" fill="#5555ff"/><rect x="307.1" y="295.4" width="9.5" height="51.1" fill="#ffff55"/><rect x="314" y="319" width="7.0" height="27.5" fill="#ffff55"/><rect x="305.1" y="322" width="9.2" height="24.5" fill="#ff5555"/><rect x="321.2" y="301.1" width="9.4" height="45.4" fill="#5555ff"/><rect x="332" y="282.1" width="9.7" height="64.4" fill="#55ff55"/><rect x="334.2" y="301.1" width="9.3" height="45.4" fill="#ff5555"/><rect x="345.4" y="279.8" width="9.2" height="66.7" fill="#ff5555"/><rect x="363.3" y="277.8" width="9.7" height="68.7" fill="#55ff55"/><rect x="364.1" y="286.4" width="9.7" height="60.1" fill="#5555ff"/><text x="279.5" y="353.5" font-size="5.5" text-anchor="middle" fill="#111">3</text><text x="289.2" y="353.5" font-size="5.5" text-anchor="middle" fill="#111">4</text><text x="298.9" y="353.5" font-size="5.5" text-anchor="middle" fill="#111">5</text><text x="308.6" y="353.5" font-size="5.5" text-anchor="middle" fill="#111">6</text><text x="318.3" y="353.5" font-size="5.5" text-anchor="middle" fill="#111">7</text><text x="328.0" y="353.5" font-size="5.5" text-anchor="middle" fill="#111">8</text><text x="337.7" y="353.5" font-size="5.5" text-anchor="middle" fill="#111">9</text><text x="347.4" y="353.5" font-size="5.5" text-anchor="middle" fill="#111">10</text><text x="357.1" y="353.5" font-size="5.5" text-anchor="middle" fill="#111">11</text><text x="366.8" y="353.5" font-size="5.5" text-anchor="middle" fill="#111">12</text><text x="376.5" y="353.5" font-size="5.5" text-anchor="middle" fill="#111">13</text><line x1="397" y1="343.7" x2="502" y2="343.7" stroke="#eeeeee" stroke-width="0.6"/><text x="395.0" y="345.7" font-size="5.5" text-anchor="end" fill="#111">0</text><line x1="397" y1="333.5" x2="502" y2="333.5" stroke="#eeeeee" stroke-width="0.6"/><text x="395.0" y="335.5" font-size="5.5" text-anchor="end" fill="#111">5</text><line x1="397" y1="323.4" x2="502" y2="323.4" stroke="#eeeeee" stroke-width="0.6"/><text x="395.0" y="325.4" font-size="5.5" text-anchor="end" fill="#111">10</text><line x1="397" y1="313.2" x2="502" y2="313.2" stroke="#eeeeee" stroke-width="0.6"/><text x="395.0" y="315.2" font-size="5.5" text-anchor="end" fill="#111">15</text><line x1="397" y1="303.0" x2="502" y2="303.0" stroke="#eeeeee" stroke-width="0.6"/><text x="395.0" y="305.0" font-size="5.5" text-anchor="end" fill="#111">20</text><line x1="397" y1="292.9" x2="502" y2="292.9" stroke="#eeeeee" stroke-width="0.6"/><text x="395.0" y="294.9" font-size="5.5" text-anchor="end" fill="#111">25</text><line x1="397" y1="282.7" x2="502" y2="282.7" stroke="#eeeeee" stroke-width="0.6"/><text x="395.0" y="284.7" font-size="5.5" text-anchor="end" fill="#111">30</text><line x1="397" y1="276" x2="397" y2="343.7" stroke="#ccc" stroke-width="0.8"/><line x1="397" y1="343.7" x2="502" y2="343.7" stroke="#ccc" stroke-width="0.8"/><rect x="401.4" y="332.6" width="24.7" height="11.1" fill="#ff5555"/><rect x="401.4" y="320.2" width="24.7" height="12.4" fill="#5555ff"/><rect x="401.4" y="300.6" width="24.7" height="19.6" fill="#55ff55"/><rect x="401.4" y="289.3" width="24.7" height="11.3" fill="#ffff55"/><rect x="437" y="320.2" width="24.7" height="23.5" fill="#ff5555"/><rect x="437" y="312" width="24.7" height="8.2" fill="#5555ff"/><rect x="437" y="301.8" width="24.7" height="10.2" fill="#55ff55"/><rect x="437" y="278.3" width="24.7" height="23.5" fill="#ffff55"/><rect x="472.7" y="329.7" width="24.5" height="14.0" fill="#ff5555"/><rect x="472.7" y="320.2" width="24.5" height="9.5" fill="#5555ff"/><rect x="472.7" y="300.6" width="24.5" height="19.6" fill="#55ff55"/><rect x="472.7" y="285.9" width="24.5" height="14.7" fill="#ffff55"/><text x="413.7" y="351.0" font-size="5.5" text-anchor="middle" fill="#111">C1</text><text x="449.3" y="351.0" font-size="5.5" text-anchor="middle" fill="#111">C2</text><text x="485.0" y="351.0" font-size="5.5" text-anchor="middle" fill="#111">C3</text><path d="M151.6 360 L155.5 357 L155.5 425 L151.6 428Z" fill="#d8d8d8"/><path d="M151.6 428 L155.5 425 L256 425 L252 428Z" fill="#d0d8e0"/><text x="148.0" y="429.5" font-size="5.5" text-anchor="end" fill="#111">0</text><text x="148.0" y="417.0" font-size="5.5" text-anchor="end" fill="#111">10</text><text x="148.0" y="404.4" font-size="5.5" text-anchor="end" fill="#111">20</text><text x="148.0" y="391.9" font-size="5.5" text-anchor="end" fill="#111">30</text><text x="148.0" y="379.3" font-size="5.5" text-anchor="end" fill="#111">40</text><text x="148.0" y="366.8" font-size="5.5" text-anchor="end" fill="#111">50</text><path d="M178.9 427.5 L184.6 424.0 L184.6 418.5 L178.9 422Z" fill="#c03a3a"/><rect x="155.2" y="422" width="23.7" height="5.5" fill="#ff5555"/><path d="M178.9 422 L184.6 418.5 L184.6 413.5 L178.9 417Z" fill="#3a3ab8"/><rect x="155.2" y="417" width="23.7" height="5.0" fill="#5555ff"/><path d="M178.9 417 L184.6 413.5 L184.6 412.5 L178.9 416Z" fill="#3ab83a"/><rect x="155.2" y="416" width="23.7" height="1.0" fill="#55ff55"/><path d="M178.9 416 L184.6 412.5 L184.6 406.7 L178.9 410.2Z" fill="#b8b040"/><rect x="155.2" y="410.2" width="23.7" height="5.8" fill="#ffff55"/><path d="M155.2 410.2 L160.9 406.7 L184.6 406.7 L178.9 410.2Z" fill="#b8b040"/><path d="M212.7 427.5 L218.4 424.0 L218.4 409.8 L212.7 413.3Z" fill="#c03a3a"/><rect x="189" y="413.3" width="23.7" height="14.2" fill="#ff5555"/><path d="M212.7 413.3 L218.4 409.8 L218.4 396.2 L212.7 399.7Z" fill="#3a3ab8"/><rect x="189" y="399.7" width="23.7" height="13.6" fill="#5555ff"/><path d="M212.7 399.7 L218.4 396.2 L218.4 387.5 L212.7 391Z" fill="#3ab83a"/><rect x="189" y="391" width="23.7" height="8.7" fill="#55ff55"/><path d="M212.7 391 L218.4 387.5 L218.4 373.1 L212.7 376.6Z" fill="#b8b040"/><rect x="189" y="376.6" width="23.7" height="14.4" fill="#ffff55"/><path d="M189 376.6 L194.7 373.1 L218.4 373.1 L212.7 376.6Z" fill="#b8b040"/><path d="M245.9 427.5 L251.6 424.0 L251.6 408.4 L245.9 411.9Z" fill="#c03a3a"/><rect x="222.1" y="411.9" width="23.8" height="15.6" fill="#ff5555"/><path d="M245.9 411.9 L251.6 408.4 L251.6 396.2 L245.9 399.7Z" fill="#3a3ab8"/><rect x="222.1" y="399.7" width="23.8" height="12.2" fill="#5555ff"/><path d="M245.9 399.7 L251.6 396.2 L251.6 375.3 L245.9 378.8Z" fill="#3ab83a"/><rect x="222.1" y="378.8" width="23.8" height="20.9" fill="#55ff55"/><path d="M245.9 378.8 L251.6 375.3 L251.6 359.7 L245.9 363.2Z" fill="#b8b040"/><rect x="222.1" y="363.2" width="23.8" height="15.6" fill="#ffff55"/><path d="M222.1 363.2 L227.8 359.7 L251.6 359.7 L245.9 363.2Z" fill="#b8b040"/><text x="167.0" y="435.0" font-size="5.5" text-anchor="middle" fill="#111">C1</text><text x="201.0" y="435.0" font-size="5.5" text-anchor="middle" fill="#111">C2</text><text x="234.0" y="435.0" font-size="5.5" text-anchor="middle" fill="#111">C3</text><line x1="272" y1="427.7" x2="378" y2="427.7" stroke="#f0f0f0" stroke-width="0.6"/><text x="269.0" y="429.7" font-size="5.5" text-anchor="end" fill="#111">0</text><line x1="272" y1="416.2" x2="378" y2="416.2" stroke="#f0f0f0" stroke-width="0.6"/><text x="269.0" y="418.2" font-size="5.5" text-anchor="end" fill="#111">10</text><line x1="272" y1="404.8" x2="378" y2="404.8" stroke="#f0f0f0" stroke-width="0.6"/><text x="269.0" y="406.8" font-size="5.5" text-anchor="end" fill="#111">20</text><line x1="272" y1="393.3" x2="378" y2="393.3" stroke="#f0f0f0" stroke-width="0.6"/><text x="269.0" y="395.3" font-size="5.5" text-anchor="end" fill="#111">30</text><line x1="272" y1="381.8" x2="378" y2="381.8" stroke="#f0f0f0" stroke-width="0.6"/><text x="269.0" y="383.8" font-size="5.5" text-anchor="end" fill="#111">40</text><line x1="272" y1="370.4" x2="378" y2="370.4" stroke="#f0f0f0" stroke-width="0.6"/><text x="269.0" y="372.4" font-size="5.5" text-anchor="end" fill="#111">50</text><line x1="272" y1="358.9" x2="378" y2="358.9" stroke="#f0f0f0" stroke-width="0.6"/><text x="269.0" y="360.9" font-size="5.5" text-anchor="end" fill="#111">60</text><line x1="272" y1="357" x2="272" y2="427.7" stroke="#ddd" stroke-width="0.8"/><line x1="272" y1="427.7" x2="378" y2="427.7" stroke="#ddd" stroke-width="0.8"/><polyline points="281.3,415.1 291.0,406.5 300.7,419.7 310.4,394.4 320.1,401.9 329.8,361.2 339.5,371.5 349.2,372.7 358.9,379.0 368.6,387.6" fill="none" stroke="#ff5555" stroke-width="0.7"/><rect x="279.7" y="413.5" width="3.2" height="3.2" fill="#ff5555"/><rect x="289.4" y="404.9" width="3.2" height="3.2" fill="#ff5555"/><rect x="299.1" y="418.1" width="3.2" height="3.2" fill="#ff5555"/><rect x="308.8" y="392.8" width="3.2" height="3.2" fill="#ff5555"/><rect x="318.5" y="400.3" width="3.2" height="3.2" fill="#ff5555"/><rect x="328.2" y="359.6" width="3.2" height="3.2" fill="#ff5555"/><rect x="337.9" y="369.9" width="3.2" height="3.2" fill="#ff5555"/><rect x="347.6" y="371.1" width="3.2" height="3.2" fill="#ff5555"/><rect x="357.3" y="377.4" width="3.2" height="3.2" fill="#ff5555"/><rect x="367.0" y="386.0" width="3.2" height="3.2" fill="#ff5555"/><polyline points="281.3,423.1 291.0,416.2 300.7,424.3 310.4,411.1 320.1,417.4 329.8,412.2 339.5,415.1 349.2,423.7 358.9,413.9 368.6,416.2" fill="none" stroke="#5555ff" stroke-width="0.7"/><circle cx="281.3" cy="423.1" r="1.5" fill="#5555ff"/><circle cx="291.0" cy="416.2" r="1.5" fill="#5555ff"/><circle cx="300.7" cy="424.3" r="1.5" fill="#5555ff"/><circle cx="310.4" cy="411.1" r="1.5" fill="#5555ff"/><circle cx="320.1" cy="417.4" r="1.5" fill="#5555ff"/><circle cx="329.8" cy="412.2" r="1.5" fill="#5555ff"/><circle cx="339.5" cy="415.1" r="1.5" fill="#5555ff"/><circle cx="349.2" cy="423.7" r="1.5" fill="#5555ff"/><circle cx="358.9" cy="413.9" r="1.5" fill="#5555ff"/><circle cx="368.6" cy="416.2" r="1.5" fill="#5555ff"/><polyline points="281.3,416.8 291.0,420.8 300.7,426.6 310.4,408.2 320.1,410.5 329.8,401.9 339.5,408.2 349.2,423.1 358.9,388.1 368.6,413.4" fill="none" stroke="#55ff55" stroke-width="0.7"/><path d="M281.3 415.2 L282.9 418.0 L279.7 418.0Z" fill="#55ff55"/><path d="M291.0 419.2 L292.6 422.0 L289.4 422.0Z" fill="#55ff55"/><path d="M300.7 425.0 L302.3 427.8 L299.1 427.8Z" fill="#55ff55"/><path d="M310.4 406.6 L312.0 409.4 L308.8 409.4Z" fill="#55ff55"/><path d="M320.1 408.9 L321.7 411.7 L318.5 411.7Z" fill="#55ff55"/><path d="M329.8 400.3 L331.4 403.1 L328.2 403.1Z" fill="#55ff55"/><path d="M339.5 406.6 L341.1 409.4 L337.9 409.4Z" fill="#55ff55"/><path d="M349.2 421.5 L350.8 424.3 L347.6 424.3Z" fill="#55ff55"/><path d="M358.9 386.5 L360.5 389.3 L357.3 389.3Z" fill="#55ff55"/><path d="M368.6 411.8 L370.2 414.6 L367.0 414.6Z" fill="#55ff55"/><text x="281.3" y="435.0" font-size="5.5" text-anchor="middle" fill="#111">C1</text><text x="291.0" y="435.0" font-size="5.5" text-anchor="middle" fill="#111">C2</text><text x="300.7" y="435.0" font-size="5.5" text-anchor="middle" fill="#111">C3</text><text x="310.4" y="435.0" font-size="5.5" text-anchor="middle" fill="#111">C4</text><text x="320.1" y="435.0" font-size="5.5" text-anchor="middle" fill="#111">C5</text><text x="329.8" y="435.0" font-size="5.5" text-anchor="middle" fill="#111">C6</text><text x="339.5" y="435.0" font-size="5.5" text-anchor="middle" fill="#111">C7</text><text x="349.2" y="435.0" font-size="5.5" text-anchor="middle" fill="#111">C8</text><text x="358.9" y="435.0" font-size="5.5" text-anchor="middle" fill="#111">C9</text><line x1="396" y1="427.9" x2="502" y2="427.9" stroke="#f0f0f0" stroke-width="0.6"/><text x="392.0" y="429.9" font-size="5.5" text-anchor="end" fill="#111">0</text><line x1="396" y1="418.7" x2="502" y2="418.7" stroke="#f0f0f0" stroke-width="0.6"/><text x="392.0" y="420.7" font-size="5.5" text-anchor="end" fill="#111">5</text><line x1="396" y1="409.5" x2="502" y2="409.5" stroke="#f0f0f0" stroke-width="0.6"/><text x="392.0" y="411.5" font-size="5.5" text-anchor="end" fill="#111">10</text><line x1="396" y1="400.3" x2="502" y2="400.3" stroke="#f0f0f0" stroke-width="0.6"/><text x="392.0" y="402.3" font-size="5.5" text-anchor="end" fill="#111">15</text><line x1="396" y1="391.1" x2="502" y2="391.1" stroke="#f0f0f0" stroke-width="0.6"/><text x="392.0" y="393.1" font-size="5.5" text-anchor="end" fill="#111">20</text><line x1="396" y1="381.9" x2="502" y2="381.9" stroke="#f0f0f0" stroke-width="0.6"/><text x="392.0" y="383.9" font-size="5.5" text-anchor="end" fill="#111">25</text><line x1="396" y1="372.7" x2="502" y2="372.7" stroke="#f0f0f0" stroke-width="0.6"/><text x="392.0" y="374.7" font-size="5.5" text-anchor="end" fill="#111">30</text><line x1="396" y1="363.5" x2="502" y2="363.5" stroke="#f0f0f0" stroke-width="0.6"/><text x="392.0" y="365.5" font-size="5.5" text-anchor="end" fill="#111">35</text><text x="407.0" y="435.0" font-size="5.5" text-anchor="middle" fill="#111">5</text><text x="419.8" y="435.0" font-size="5.5" text-anchor="middle" fill="#111">10</text><text x="432.5" y="435.0" font-size="5.5" text-anchor="middle" fill="#111">15</text><text x="445.3" y="435.0" font-size="5.5" text-anchor="middle" fill="#111">20</text><text x="458.0" y="435.0" font-size="5.5" text-anchor="middle" fill="#111">25</text><text x="470.8" y="435.0" font-size="5.5" text-anchor="middle" fill="#111">30</text><text x="483.5" y="435.0" font-size="5.5" text-anchor="middle" fill="#111">35</text><text x="496.2" y="435.0" font-size="5.5" text-anchor="middle" fill="#111">40</text><line x1="407.0" y1="358" x2="407.0" y2="427.9" stroke="#f0f0f0" stroke-width="0.6"/><line x1="419.8" y1="358" x2="419.8" y2="427.9" stroke="#f0f0f0" stroke-width="0.6"/><line x1="432.5" y1="358" x2="432.5" y2="427.9" stroke="#f0f0f0" stroke-width="0.6"/><line x1="445.3" y1="358" x2="445.3" y2="427.9" stroke="#f0f0f0" stroke-width="0.6"/><line x1="458.0" y1="358" x2="458.0" y2="427.9" stroke="#f0f0f0" stroke-width="0.6"/><line x1="470.8" y1="358" x2="470.8" y2="427.9" stroke="#f0f0f0" stroke-width="0.6"/><line x1="483.5" y1="358" x2="483.5" y2="427.9" stroke="#f0f0f0" stroke-width="0.6"/><line x1="496.2" y1="358" x2="496.2" y2="427.9" stroke="#f0f0f0" stroke-width="0.6"/><line x1="395" y1="358" x2="395" y2="427.9" stroke="#ddd" stroke-width="0.8"/><line x1="395" y1="427.9" x2="502" y2="427.9" stroke="#ddd" stroke-width="0.8"/><polyline points="407.0,418.7 424.9,407.7 437.6,418.7 452.9,418.7 465.7,394.8 488.6,361.7 496.2,420.5" fill="none" stroke="#f09090" stroke-width="0.8"/><polyline points="399.4,404.0 401.9,422.4 407.0,420.5 412.1,381.9 424.9,405.8 455.5,396.6 473.3,361.7 475.9,396.6 488.6,400.3" fill="none" stroke="#90e090" stroke-width="0.8"/><polyline points="404.5,405.8 407.0,418.7 412.1,409.5 432.5,387.4 437.6,409.5 452.9,411.3 465.7,398.5" fill="none" stroke="#8080e0" stroke-width="0.8"/><polyline points="407.0,418.7 424.9,407.7 437.6,418.7" fill="none" stroke="#f0b070" stroke-width="0.8"/><text x="148.0" y="454.0" font-size="5.5" text-anchor="end" fill="#111">75</text><text x="148.0" y="473.0" font-size="5.5" text-anchor="end" fill="#111">50</text><line x1="151.5" y1="440" x2="151.5" y2="475" stroke="#ddd" stroke-width="0.8"/><path d="M165 475 L170 470 L180 467 L189 458 L200 455 L208.5 444 L217 449 L228 462.5 L238.5 465.5 L245 453 L247.5 452.5 L247.5 475Z" fill="#ff8080"/><path d="M205 475 L209.5 464 L215 468 L220 475Z" fill="#66dd66"/><text x="269.0" y="446.0" font-size="5.5" text-anchor="end" fill="#111">40</text><text x="269.0" y="462.0" font-size="5.5" text-anchor="end" fill="#111">30</text><line x1="272" y1="440" x2="272" y2="475" stroke="#ddd" stroke-width="0.8"/><path d="M309.3 475 L309.3 466.4 L322.5 475Z" fill="#7070ee"/><path d="M330 475 L346.5 448 L346.5 475Z" fill="#ffff66"/><path d="M364 475 L369 471 L369.5 475Z" fill="#d08090"/><line x1="392.6" y1="440" x2="392.6" y2="475" stroke="#ddd" stroke-width="0.8"/><text x="391.0" y="441.0" font-size="3" text-anchor="end" fill="#333">300</text><text x="391.0" y="445.5" font-size="3" text-anchor="end" fill="#333">275</text><text x="391.0" y="450.0" font-size="3" text-anchor="end" fill="#333">250</text><text x="391.0" y="454.5" font-size="3" text-anchor="end" fill="#333">225</text><text x="391.0" y="459.0" font-size="3" text-anchor="end" fill="#333">200</text><text x="391.0" y="463.5" font-size="3" text-anchor="end" fill="#333">175</text><text x="391.0" y="468.0" font-size="3" text-anchor="end" fill="#333">150</text><text x="391.0" y="472.5" font-size="3" text-anchor="end" fill="#333">125</text><path d="M402.2 475 L402.2 470.4 L413 465 L422.5 464.2 L427 475Z" fill="#ff6666"/><path d="M459 475 L463 466 L482.5 445.8 L492 475Z" fill="#ff6666"/><path d="M459 475 L462.5 469 L472.5 474 L482 465 L486.5 475Z" fill="#6666ee"/></svg>
</div>

<div class="a" style="left:513px;top:191px;width:16px;height:284px;background:linear-gradient(90deg,#f3f1e8,#fefefb)"></div>
<div class="sbb" style="left:514px;top:191px;width:14px;height:16px"><svg width="14" height="16" style="position:absolute;left:-1px;top:-1px"><path d="M3.5 9.5 L7 6 L10.5 9.5" stroke="#4d6185" stroke-width="2" fill="none"/></svg></div>
<div class="thumb" style="left:514px;top:208px;width:14px;height:122px"></div>
<div style="position:absolute;left:517px;top:265px;width:7px;height:1px;background:#eef4fe;box-shadow:1px 1px 0 #8cb0f8"></div><div style="position:absolute;left:517px;top:267px;width:7px;height:1px;background:#eef4fe;box-shadow:1px 1px 0 #8cb0f8"></div><div style="position:absolute;left:517px;top:269px;width:7px;height:1px;background:#eef4fe;box-shadow:1px 1px 0 #8cb0f8"></div><div style="position:absolute;left:517px;top:271px;width:7px;height:1px;background:#eef4fe;box-shadow:1px 1px 0 #8cb0f8"></div>
<div class="sbb" style="left:514px;top:459px;width:14px;height:16px"><svg width="14" height="16" style="position:absolute;left:-1px;top:-1px"><path d="M3.5 5.5 L7 9 L10.5 5.5" stroke="#4d6185" stroke-width="2" fill="none"/></svg></div>
<div class="a" style="left:138px;top:475px;width:391px;height:1px;background:#8a8a8a"></div>
<svg class="a" style="left:140px;top:168px" width="16" height="16"><rect width="16" height="16" fill="#f2f6f8"/><path d="M0 0H16V4Q9 1 0 5Z" fill="#e4eaf2"/><path d="M9 1 Q13 2 15 6 L16 6 V0Z" fill="#f4f0e0"/><circle cx="4" cy="4" r="1.3" fill="#b0a8c8"/><path d="M2.5 5.5H5.5L6 10L5.3 15.5H4.2L4 11L3.4 15.5H2.3L2.2 10Z" fill="#7880b0"/><path d="M2.3 7L1 11" stroke="#40486a" stroke-width="0.9"/><circle cx="6.3" cy="7.2" r="0.75" fill="#28385a"/><circle cx="7.5" cy="9.3" r="0.75" fill="#28385a"/><circle cx="8.6" cy="11.5" r="0.75" fill="#28385a"/><circle cx="9.6" cy="13.5" r="0.75" fill="#28385a"/><path d="M9.8 7.2L12.6 7.4L13.4 9.2L14.6 10.2L14.8 15.5H11.2L11.4 10.5L10.2 9Z" fill="#000"/><circle cx="15" cy="13" r="0.8" fill="#1a5a2a"/></svg>
<div class="a" style="left:507px;top:166px;width:21px;height:21px;border:1px solid #fff;border-radius:3px;background:radial-gradient(circle at 75% 85%,#f46a3a,#e0502a 45%,#c8401e 90%)"><svg width="19" height="19" style="position:absolute;left:0;top:0"><path d="M4.5 4.5 L14.5 14.5 M14.5 4.5 L4.5 14.5" stroke="#fff" stroke-width="2.2"/></svg></div>
<div class="a" style="left:140px;top:483px;width:387px;height:40px;border:1px solid #a8a898;border-bottom-color:#98988a"></div>
<div class="a" style="left:146px;top:477px;padding:0 1px;background:#ece9d8;color:#1e3a9c;font-size:11px;line-height:14px;-webkit-text-stroke:0.15px #1e3a9c">Chart info</div>
<div class="a" style="left:387px;top:531px;width:68px;height:21px;border:1px solid #c9c7ba;border-radius:3px;background:#f5f4ea;color:#aca899;font-size:11px;line-height:19px;text-align:center">OK</div>
<div class="a" style="left:463px;top:531px;width:63px;height:21px;border:1px solid #003c74;border-radius:3px;background:linear-gradient(180deg,#fff,#ecebe6 85%,#d6d0c5);color:#000;font-size:11px;line-height:19px;text-align:center">Cancel</div>

</body></html>
